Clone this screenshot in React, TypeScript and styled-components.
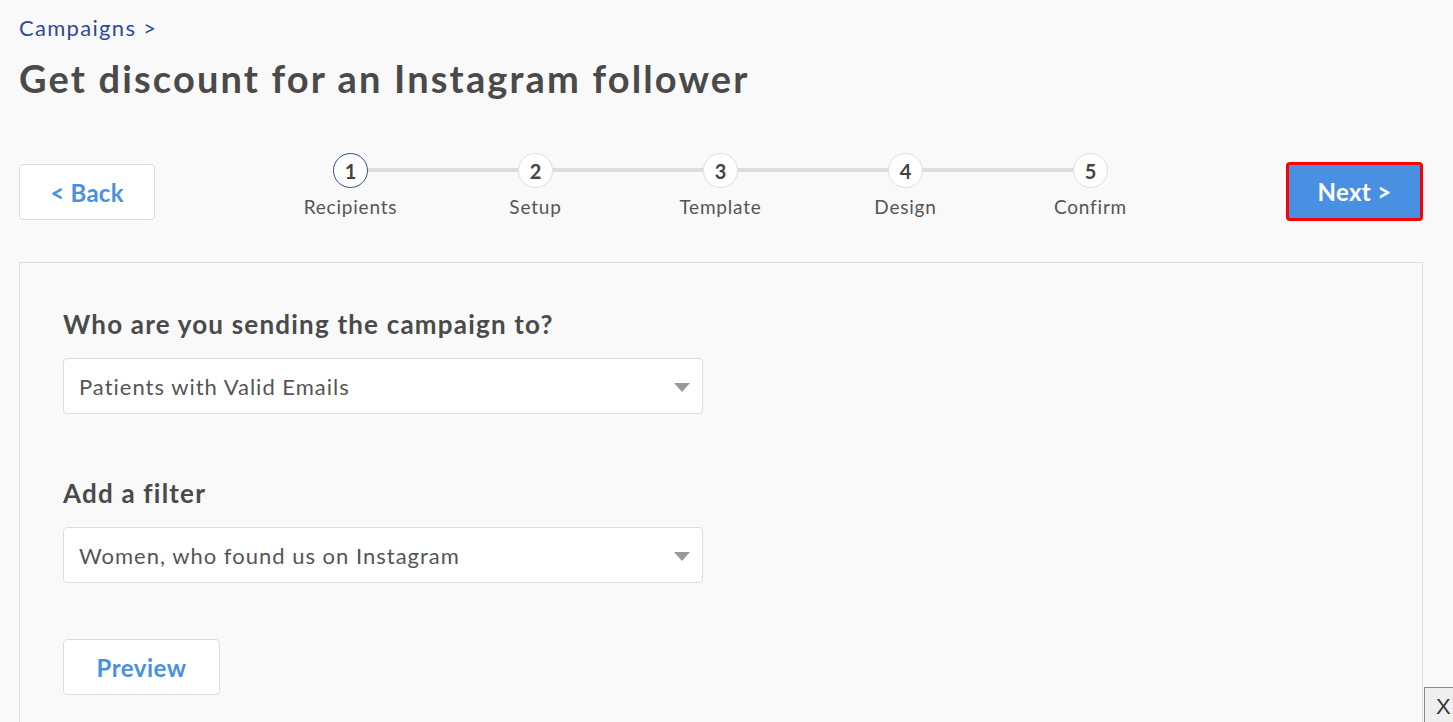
import React from "react";
import styled, { createGlobalStyle } from "styled-components";

const Global = createGlobalStyle`
  html, body { margin: 0; padding: 0; background: #f9f9f9; }
  body { font-family: Lato, "Open Sans", sans-serif; color: #4a4a4a; overflow: hidden; }
  * { box-sizing: border-box; }
`;

const Page = styled.div`
  padding: 14px 30px 0 19px;
  height: 722px;
  overflow: hidden;
`;

const Crumb = styled.a`
  display: block;
  font-size: 22px;
  letter-spacing: 1.3px;
  color: #2f4b96;
  text-decoration: none;
  line-height: 28px;
`;

const Title = styled.h1`
  margin: 13px 0 0;
  font-size: 38px;
  letter-spacing: 2.15px;
  font-weight: 700;
  color: #4a4a4a;
  line-height: 46px;
`;

const Toolbar = styled.div`
  display: flex;
  align-items: flex-start;
  justify-content: space-between;
  margin-top: 63px;
`;

const Button = styled.button<{ $primary?: boolean }>`
  flex: none;
  height: ${(p) => (p.$primary ? "59px" : "56px")};
  width: ${(p) => (p.$primary ? "137px" : "136px")};
  border-radius: 4px;
  border: ${(p) => (p.$primary ? "3px solid #f00" : "1px solid #dcdcdc")};
  background: ${(p) => (p.$primary ? "#4a90e2" : "#fff")};
  color: ${(p) => (p.$primary ? "#fff" : "#4a90e2")};
  font-family: Lato, sans-serif;
  font-size: 24px;
  font-weight: 700;
  letter-spacing: 0.3px;
  cursor: pointer;
  padding: 0;
  margin-top: ${(p) => (p.$primary ? "-2px" : "0")};
`;

const Steps = styled.div`
  flex: none;
  display: flex;
  margin-top: -11px;
`;

const Step = styled.div<{ $last?: boolean }>`
  position: relative;
  width: 185px;
  display: flex;
  flex-direction: column;
  align-items: center;
  &::after {
    content: "";
    display: ${(p) => (p.$last ? "none" : "block")};
    position: absolute;
    top: 15px;
    left: 92px;
    width: 185px;
    height: 4px;
    background: #dddddd;
  }
`;

const Circle = styled.div<{ $active?: boolean }>`
  position: relative;
  z-index: 1;
  width: 35px;
  height: 35px;
  border-radius: 50%;
  background: #fff;
  border: 1px solid ${(p) => (p.$active ? "#2f4b96" : "#e0e0e0")};
  display: flex;
  align-items: center;
  justify-content: center;
  font-size: 20px;
  font-weight: 700;
  color: #444;
`;

const StepLabel = styled.div`
  margin-top: 7px;
  font-size: 19px;
  letter-spacing: 0.8px;
  color: #555;
`;

const Panel = styled.section`
  margin-top: 41px;
  border: 1px solid #dddddd;
  border-bottom: none;
  height: 500px;
  padding: 45px 43px;
`;

const Question = styled.h2`
  margin: 0;
  font-size: 26px;
  letter-spacing: 1.2px;
  font-weight: 700;
  color: #4a4a4a;
  line-height: 32px;
`;

const Select = styled.div`
  margin-top: 18px;
  width: 640px;
  height: 56px;
  background: #fff;
  border: 1px solid #dddddd;
  border-radius: 4px;
  display: flex;
  align-items: center;
  justify-content: space-between;
  padding: 0 12px 0 15px;
  font-size: 22px;
  letter-spacing: 1px;
  color: #555;
`;

const Caret = styled.span`
  width: 0;
  height: 0;
  border-left: 8px solid transparent;
  border-right: 8px solid transparent;
  border-top: 9px solid #999;
  margin-top: 2px;
`;

const Field = styled.div<{ $top?: number }>`
  margin-top: ${(p) => p.$top ?? 0}px;
`;

const PreviewButton = styled(Button)`
  width: 157px;
  margin-top: 56px;
  letter-spacing: 0.5px;
`;

const CloseTab = styled.div`
  position: fixed;
  left: 1424px;
  top: 687px;
  width: 40px;
  height: 40px;
  background: #efefef;
  border: 1px solid #888;
  font-family: "Liberation Sans", sans-serif;
  font-size: 22px;
  color: #333;
  padding: 6px 0 0 11px;
`;

const steps = ["Recipients", "Setup", "Template", "Design", "Confirm"];

export default function App() {
  return (
    <>
      <Global />
      <Page>
        <Crumb href="#">Campaigns &gt;</Crumb>
        <Title>Get discount for an Instagram follower</Title>
        <Toolbar>
          <Button>&lt; Back</Button>
          <Steps>
            {steps.map((s, i) => (
              <Step key={s} $last={i === steps.length - 1}>
                <Circle $active={i === 0}>{i + 1}</Circle>
                <StepLabel>{s}</StepLabel>
              </Step>
            ))}
          </Steps>
          <Button $primary>Next &gt;</Button>
        </Toolbar>
        <Panel>
          <Field>
            <Question>Who are you sending the campaign to?</Question>
            <Select>
              Patients with Valid Emails
              <Caret />
            </Select>
          </Field>
          <Field $top={63}>
            <Question>Add a filter</Question>
            <Select>
              Women, who found us on Instagram
              <Caret />
            </Select>
          </Field>
          <PreviewButton>Preview</PreviewButton>
        </Panel>
      </Page>
      <CloseTab>X</CloseTab>
    </>
  );
}
